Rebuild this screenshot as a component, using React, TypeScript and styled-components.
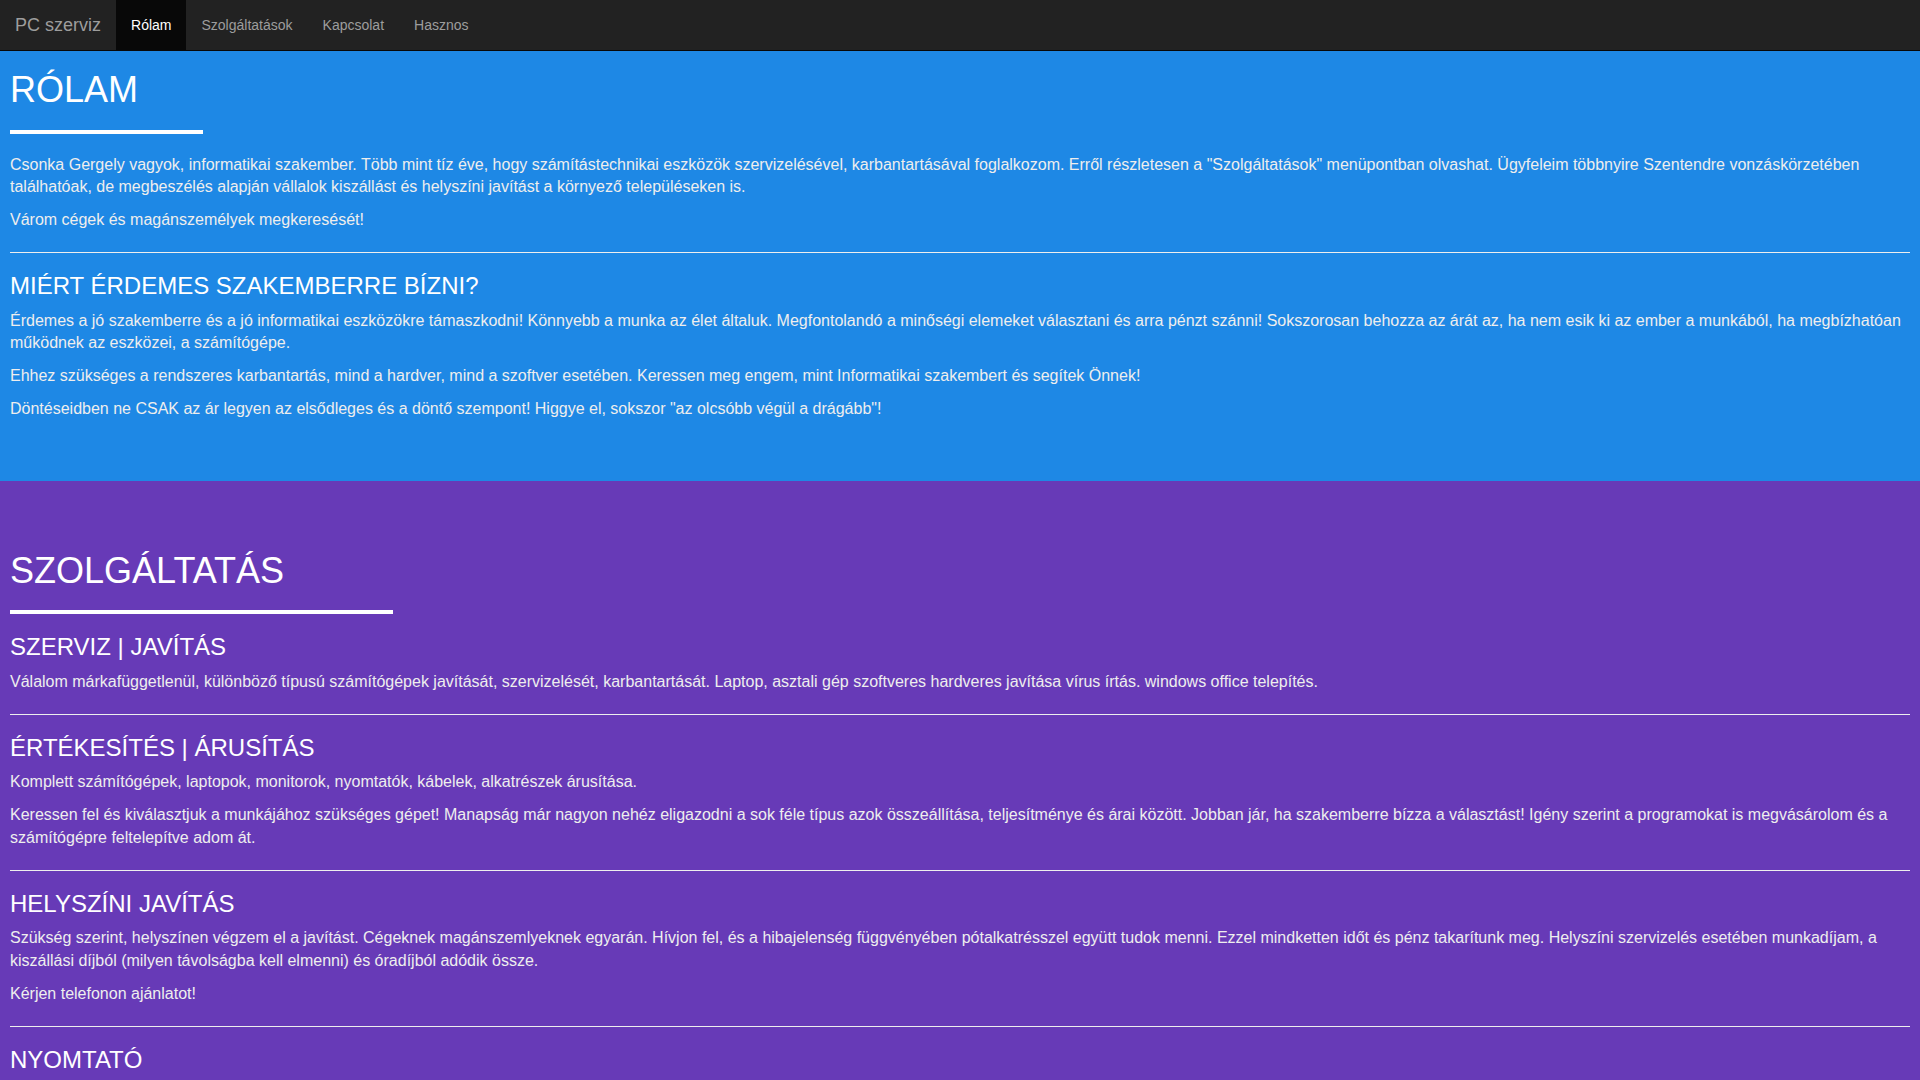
import styled, { createGlobalStyle } from "styled-components";

const GlobalStyle = createGlobalStyle`
  html {
    scrollbar-width: none;
  }

  body {
    margin: 0;
    font-family: "Liberation Sans", Arial, Helvetica, sans-serif;
    font-size: 16px;
    line-height: 1.42857;
    color: #eee;
  }

  * {
    box-sizing: border-box;
  }
`;

const Navbar = styled.nav`
  display: flex;
  align-items: stretch;
  height: 51px;
  background: #222;
  border-bottom: 1px solid #080808;
`;

const Brand = styled.a`
  padding: 15px;
  font-size: 18px;
  line-height: 20px;
  color: #9d9d9d;
  text-decoration: none;
`;

const NavList = styled.ul`
  display: flex;
  margin: 0;
  padding: 0;
  list-style: none;
`;

const NavLink = styled.a<{ $active?: boolean }>`
  display: block;
  padding: 15px;
  font-size: 14px;
  line-height: 20px;
  text-decoration: none;
  color: ${(p) => (p.$active ? "#fff" : "#9d9d9d")};
  background: ${(p) => (p.$active ? "#080808" : "transparent")};
`;

const Section = styled.section<{ $bg: string; $top: number }>`
  background: ${(p) => p.$bg};
  padding: ${(p) => p.$top}px 10px 50px;
`;

const Title = styled.h1`
  margin: 0 0 10px;
  font-size: 36px;
  font-weight: 400;
  line-height: 1.1;
  color: #fff;
`;

const TitleBar = styled.hr<{ $width: number }>`
  width: ${(p) => p.$width}px;
  margin: 20px 0;
  border: 0;
  border-top: 4px solid #fff;
`;

const Subtitle = styled.h3`
  margin: 20px 0 10px;
  font-size: 24px;
  font-weight: 400;
  line-height: 1.1;
  color: #fff;
`;

const Text = styled.p`
  margin: 0 0 10px;
`;

const Divider = styled.hr`
  margin: 20px 0;
  border: 0;
  border-top: 1px solid #eee;
`;

export default function App() {
  return (
    <>
      <GlobalStyle />
      <Navbar>
        <Brand href="#">PC szerviz</Brand>
        <NavList>
          <li>
            <NavLink href="#" $active>
              Rólam
            </NavLink>
          </li>
          <li>
            <NavLink href="#">Szolgáltatások</NavLink>
          </li>
          <li>
            <NavLink href="#">Kapcsolat</NavLink>
          </li>
          <li>
            <NavLink href="#">Hasznos</NavLink>
          </li>
        </NavList>
      </Navbar>

      <Section $bg="#1e88e5" $top={19}>
        <Title>RÓLAM</Title>
        <TitleBar $width={193} />
        <Text>
          Csonka Gergely vagyok, informatikai szakember. Több mint tíz éve, hogy számítástechnikai
          eszközök szervizelésével, karbantartásával foglalkozom. Erről részletesen a
          "Szolgáltatások" menüpontban olvashat. Ügyfeleim többnyire Szentendre vonzáskörzetében
          találhatóak, de megbeszélés alapján vállalok kiszállást és helyszíni javítást a környező
          településeken is.
        </Text>
        <Text>Várom cégek és magánszemélyek megkeresését!</Text>
        <Divider />
        <Subtitle>MIÉRT ÉRDEMES SZAKEMBERRE BÍZNI?</Subtitle>
        <Text>
          Érdemes a jó szakemberre és a jó informatikai eszközökre támaszkodni! Könnyebb a munka
          az élet általuk. Megfontolandó a minőségi elemeket választani és arra pénzt szánni!
          Sokszorosan behozza az árát az, ha nem esik ki az ember a munkából, ha megbízhatóan
          működnek az eszközei, a számítógépe.
        </Text>
        <Text>
          Ehhez szükséges a rendszeres karbantartás, mind a hardver, mind a szoftver esetében.
          Keressen meg engem, mint Informatikai szakembert és segítek Önnek!
        </Text>
        <Text>
          Döntéseidben ne CSAK az ár legyen az elsődleges és a döntő szempont! Higgye el, sokszor
          "az olcsóbb végül a drágább"!
        </Text>
      </Section>

      <Section $bg="#673ab7" $top={70}>
        <Title>SZOLGÁLTATÁS</Title>
        <TitleBar $width={383} />
        <Subtitle>SZERVIZ | JAVÍTÁS</Subtitle>
        <Text>
          Válalom márkafüggetlenül, különböző típusú számítógépek javítását, szervizelését,
          karbantartását. Laptop, asztali gép szoftveres hardveres javítása vírus írtás. windows
          office telepítés.
        </Text>
        <Divider />
        <Subtitle>ÉRTÉKESÍTÉS | ÁRUSÍTÁS</Subtitle>
        <Text>Komplett számítógépek, laptopok, monitorok, nyomtatók, kábelek, alkatrészek árusítása.</Text>
        <Text>
          Keressen fel és kiválasztjuk a munkájához szükséges gépet! Manapság már nagyon nehéz
          eligazodni a sok féle típus azok összeállítása, teljesítménye és árai között. Jobban jár,
          ha szakemberre bízza a választást! Igény szerint a programokat is megvásárolom és a
          számítógépre feltelepítve adom át.
        </Text>
        <Divider />
        <Subtitle>HELYSZÍNI JAVÍTÁS</Subtitle>
        <Text>
          Szükség szerint, helyszínen végzem el a javítást. Cégeknek magánszemlyeknek egyarán.
          Hívjon fel, és a hibajelenség függvényében pótalkatrésszel együtt tudok menni. Ezzel
          mindketten időt és pénz takarítunk meg. Helyszíni szervizelés esetében munkadíjam, a
          kiszállási díjból (milyen távolságba kell elmenni) és óradíjból adódik össze.
        </Text>
        <Text>Kérjen telefonon ajánlatot!</Text>
        <Divider />
        <Subtitle>NYOMTATÓ</Subtitle>
      </Section>
    </>
  );
}
